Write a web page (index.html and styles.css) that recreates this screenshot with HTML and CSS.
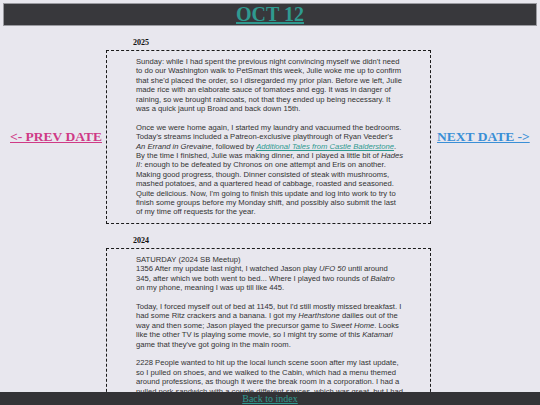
FILE: index.html
```html
<!DOCTYPE html>
<html lang="en">
<head>
    <meta charset="UTF-8">
    <meta name="viewport" content="width=device-width, initial-scale=1.0">
    <title>Oct 12</title>
    <link rel="stylesheet" href="styles.css">
</head>
<body>
    <header class="title-bar">
        <h1><a href="#">OCT 12</a></h1>
    </header>

    <main class="day-grid">
        <!-- 2025 -->
        <h2 class="year">2025</h2>
        <div class="side prev"><a href="#">&lt;- PREV DATE</a></div>
        <div class="entry">
            <p>Sunday: while I had spent the previous night convincing myself we didn't need to do our Washington walk to PetSmart this week, Julie woke me up to confirm that she'd placed the order, so I disregarded my prior plan. Before we left, Julie made rice with an elaborate sauce of tomatoes and egg. It was in danger of raining, so we brought raincoats, not that they ended up being necessary. It was a quick jaunt up Broad and back down 15th.</p>
            <p>Once we were home again, I started my laundry and vacuumed the bedrooms. Today's streams included a Patreon-exclusive playthrough of Ryan Veeder's <i>An Errand in Grevaine</i>, followed by <a href="#"><i>Additional Tales from Castle Balderstone</i></a>. By the time I finished, Julie was making dinner, and I played a little bit of <i>Hades II</i>: enough to be defeated by Chronos on one attempt and Eris on another. Making good progress, though. Dinner consisted of steak with mushrooms, mashed potatoes, and a quartered head of cabbage, roasted and seasoned. Quite delicious. Now, I'm going to finish this update and log into work to try to finish some groups before my Monday shift, and possibly also submit the last of my time off requests for the year.</p>
        </div>
        <div class="side next"><a href="#">NEXT DATE -&gt;</a></div>

        <!-- 2024 -->
        <h2 class="year">2024</h2>
        <div class="entry">
            <p>SATURDAY (2024 SB Meetup)<br>1356 After my update last night, I watched Jason play <i>UFO 50</i> until around 345, after which we both went to bed... Where I played two rounds of <i>Balatro</i> on my phone, meaning I was up till like 445.</p>
            <p>Today, I forced myself out of bed at 1145, but I'd still mostly missed breakfast. I had some Ritz crackers and a banana. I got my <i>Hearthstone</i> dailies out of the way and then some; Jason played the precursor game to <i>Sweet Home</i>. Looks like the other TV is playing some movie, so I might try some of this <i>Katamari</i> game that they've got going in the main room.</p>
            <p>2228 People wanted to hit up the local lunch scene soon after my last update, so I pulled on shoes, and we walked to the Cabin, which had a menu themed around professions, as though it were the break room in a corporation. I had a pulled pork sandwich with a couple different sauces, which was great, but I had to eat it rather fast.</p>
        </div>
    </main>

    <footer class="bottom-bar">
        <a href="#">Back to index</a>
    </footer>
</body>
</html>
```

FILE: styles.css
```css
html, body {
    margin: 0;
    padding: 0;
}

body {
    background-color: #e8e7ee;
    color: #333;
    font-family: "Liberation Serif", "Times New Roman", serif;
    padding: 3px 3px 30px;
}

.title-bar {
    background: #38383c;
    border: 1px solid #9a9aa0;
    text-align: center;
}

.title-bar h1 {
    margin: 0;
    font-size: 20px;
    line-height: 21px;
}

.title-bar a {
    color: #2f9a90;
}

.day-grid {
    display: grid;
    grid-template-columns: 103px 325px 1fr;
    padding-top: 12px;
}

.year {
    grid-column: 2;
    margin: 0 0 3px 27px;
    font-size: 8px;
    line-height: 9px;
    color: #111;
}

.entry {
    grid-column: 2;
    border: 1px dashed #1a1a1a;
    padding: 6px 26px 6px 29px;
    margin-bottom: 12px;
    font-family: "Liberation Sans", Arial, sans-serif;
    font-size: 7.65px;
    line-height: 9.4px;
    color: #333;
}

.entry p {
    margin: 0 0 9.4px;
}

.entry p:last-child {
    margin-bottom: 0;
}

.entry a {
    color: #2f9a90;
}

.side {
    align-self: center;
    font-size: 13.5px;
    font-weight: bold;
    margin-bottom: 12px;
}

.side.prev {
    grid-column: 1;
    padding-left: 7px;
}

.side.next {
    grid-column: 3;
    padding-left: 6px;
}

.prev a {
    color: #cf3a86;
}

.next a {
    color: #3a8fd6;
}

.bottom-bar {
    position: fixed;
    left: 0;
    right: 0;
    bottom: 0;
    height: 13px;
    background: #333336;
    text-align: center;
    font-size: 10px;
    line-height: 13px;
}

.bottom-bar a {
    color: #2f9a90;
}
```
